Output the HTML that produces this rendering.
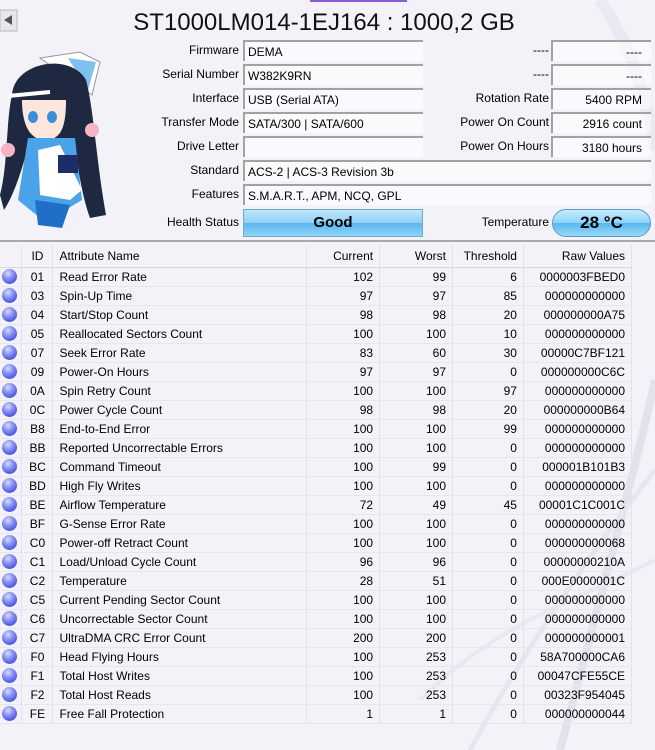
<!DOCTYPE html>
<html><head><meta charset="utf-8"><style>
*{margin:0;padding:0;box-sizing:border-box}
body{width:655px;height:750px;overflow:hidden;background:#f3f2f9;font-family:"Liberation Sans",sans-serif;font-size:12px;color:#000;position:relative}
.a{position:absolute}
.lbl{position:absolute;text-align:right;white-space:nowrap;line-height:20px}
.fld{position:absolute;height:21px;border-top:2px solid #a2a2a2;border-left:2px solid #a2a2a2;background:rgba(255,255,255,.55);line-height:20px;padding-left:3px;white-space:nowrap}
.r{text-align:right;padding-right:9px}
table{position:absolute;left:0;top:245px;border-collapse:collapse;width:632px;font-size:12px}
td,th{height:19px;border-right:1px solid #e2e2ea;border-bottom:1px solid #e6e6ee;font-weight:normal;white-space:nowrap;padding:0 6px}
th{height:22px;border-bottom:1px solid #d6d6de}
tr td:nth-child(2),tr th:nth-child(2){text-align:center}
td:nth-child(3),th:nth-child(3){text-align:left}
td:nth-child(n+4),th:nth-child(n+4){text-align:right}
td:first-child,th:first-child{width:22px;padding:0}
th:nth-child(2),td:nth-child(2){width:31px}
th:nth-child(3),td:nth-child(3){width:254px}
th:nth-child(4),td:nth-child(4){width:73px}
th:nth-child(5),td:nth-child(5){width:73px}
th:nth-child(6),td:nth-child(6){width:71px}
th:nth-child(7),td:nth-child(7){width:108px}
.dot{display:block;width:15px;height:15px;border-radius:50%;margin-left:2px;background:radial-gradient(circle at 40% 30%,#d8dcff 0,#8d95f5 35%,#4a55e0 75%,#3b44c8 100%)}
</style></head><body>
<svg class="a" style="left:0;top:0" width="655" height="750">
<path d="M560 750 C600 600 640 450 655 380" stroke="#e2e2ec" stroke-width="8" fill="none"/>
<path d="M470 750 C530 640 600 540 655 470" stroke="#e6e6ee" stroke-width="5" fill="none"/>
<path d="M420 700 C500 620 580 600 655 560" stroke="#e8e8f0" stroke-width="4" fill="none"/>
<path d="M600 0 C640 60 650 120 655 150" stroke="#e9e9f2" stroke-width="12" fill="none"/>
<rect x="310" y="0" width="97" height="2" fill="#8a5ad8"/>
<rect x="0" y="10" width="17" height="21" fill="#e6e6ec" stroke="#b8b8c0"/>
<path d="M4 20 L12 15 L12 25Z" fill="#555"/>
<g>
<path d="M40 58 L80 52 L100 62 L92 95 Z" fill="#fff" stroke="#999"/>
<path d="M68 58 L96 62 L88 90 Z" fill="#7fc0ee"/>
<path d="M12 95 C14 62 70 52 86 80 C94 110 96 160 106 215 L90 218 C80 190 78 160 72 140 L30 140 C22 170 14 195 4 210 L0 195 C8 165 6 120 12 95Z" fill="#1e2840"/>
<path d="M8 96 L50 92" stroke="#fff" stroke-width="4"/>
<path d="M22 100 C22 125 30 140 45 140 C62 140 66 125 66 100Z" fill="#fde6de"/>
<ellipse cx="33" cy="117" rx="5" ry="6" fill="#3a8fd8"/>
<ellipse cx="52" cy="117" rx="5" ry="6" fill="#3a8fd8"/>
<path d="M28 138 L75 138 L82 200 L45 222 L18 200Z" fill="#4aa3e8"/>
<path d="M38 150 L60 145 L82 190 L70 200 L40 195Z" fill="#fff"/>
<rect x="58" y="155" width="20" height="18" fill="#1c2d6a"/>
<path d="M35 200 L70 205 L62 228 L38 225Z" fill="#1f6fc8"/>
<circle cx="8" cy="150" r="7" fill="#f9b4c4"/>
<circle cx="92" cy="130" r="7" fill="#f9b4c4"/>
</g>
</svg>
<div class="a" style="left:0;top:6px;width:648px;text-align:center;font-size:24px;line-height:34px;color:#111">ST1000LM014-1EJ164 : 1000,2 GB</div>

<div class="lbl" style="right:416px;top:40px">Firmware</div><div class="fld" style="left:243px;top:40px;width:180px">DEMA</div>
<div class="lbl" style="right:416px;top:64px">Serial Number</div><div class="fld" style="left:243px;top:64px;width:180px">W382K9RN</div>
<div class="lbl" style="right:416px;top:88px">Interface</div><div class="fld" style="left:243px;top:88px;width:180px">USB (Serial ATA)</div>
<div class="lbl" style="right:416px;top:112px">Transfer Mode</div><div class="fld" style="left:243px;top:112px;width:180px">SATA/300 | SATA/600</div>
<div class="lbl" style="right:416px;top:136px">Drive Letter</div><div class="fld" style="left:243px;top:136px;width:180px"></div>
<div class="lbl" style="right:416px;top:160px">Standard</div><div class="fld" style="left:243px;top:160px;width:408px">ACS-2 | ACS-3 Revision 3b</div>
<div class="lbl" style="right:416px;top:184px">Features</div><div class="fld" style="left:243px;top:184px;width:408px">S.M.A.R.T., APM, NCQ, GPL</div>
<div class="lbl" style="right:416px;top:212px">Health Status</div>
<div class="a" style="left:243px;top:209px;width:180px;height:28px;border:1px solid #7ab;background:linear-gradient(#bfe6fb,#8fd0f5 50%,#5cb6ee 51%,#8dd4f8);text-align:center;font-weight:bold;font-size:15px;line-height:26px">Good</div>

<div class="lbl" style="right:106px;top:40px">----</div><div class="fld r" style="left:551px;top:40px;width:100px">----</div>
<div class="lbl" style="right:106px;top:64px">----</div><div class="fld r" style="left:551px;top:64px;width:100px">----</div>
<div class="lbl" style="right:106px;top:88px">Rotation Rate</div><div class="fld r" style="left:551px;top:88px;width:100px">5400 RPM</div>
<div class="lbl" style="right:106px;top:112px">Power On Count</div><div class="fld r" style="left:551px;top:112px;width:100px">2916 count</div>
<div class="lbl" style="right:106px;top:136px">Power On Hours</div><div class="fld r" style="left:551px;top:136px;width:100px">3180 hours</div>
<div class="lbl" style="right:106px;top:212px">Temperature</div>
<div class="a" style="left:552px;top:209px;width:99px;height:28px;border:1px solid #5a9ac8;border-radius:14px;background:linear-gradient(#c8ecfd,#8dd3f7 50%,#55b8ef 51%,#9ad9f8);text-align:center;font-weight:bold;font-size:17px;line-height:26px">28 °C</div>

<div class="a" style="left:0;top:240px;width:655px;height:2px;background:#a8a8b0"></div>
<table>
<tr><th></th><th>ID</th><th>Attribute Name</th><th>Current</th><th>Worst</th><th>Threshold</th><th>Raw Values</th></tr>
<tr><td><i class="dot"></i></td><td>01</td><td>Read Error Rate</td><td>102</td><td>99</td><td>6</td><td>0000003FBED0</td></tr>
<tr><td><i class="dot"></i></td><td>03</td><td>Spin-Up Time</td><td>97</td><td>97</td><td>85</td><td>000000000000</td></tr>
<tr><td><i class="dot"></i></td><td>04</td><td>Start/Stop Count</td><td>98</td><td>98</td><td>20</td><td>000000000A75</td></tr>
<tr><td><i class="dot"></i></td><td>05</td><td>Reallocated Sectors Count</td><td>100</td><td>100</td><td>10</td><td>000000000000</td></tr>
<tr><td><i class="dot"></i></td><td>07</td><td>Seek Error Rate</td><td>83</td><td>60</td><td>30</td><td>00000C7BF121</td></tr>
<tr><td><i class="dot"></i></td><td>09</td><td>Power-On Hours</td><td>97</td><td>97</td><td>0</td><td>000000000C6C</td></tr>
<tr><td><i class="dot"></i></td><td>0A</td><td>Spin Retry Count</td><td>100</td><td>100</td><td>97</td><td>000000000000</td></tr>
<tr><td><i class="dot"></i></td><td>0C</td><td>Power Cycle Count</td><td>98</td><td>98</td><td>20</td><td>000000000B64</td></tr>
<tr><td><i class="dot"></i></td><td>B8</td><td>End-to-End Error</td><td>100</td><td>100</td><td>99</td><td>000000000000</td></tr>
<tr><td><i class="dot"></i></td><td>BB</td><td>Reported Uncorrectable Errors</td><td>100</td><td>100</td><td>0</td><td>000000000000</td></tr>
<tr><td><i class="dot"></i></td><td>BC</td><td>Command Timeout</td><td>100</td><td>99</td><td>0</td><td>000001B101B3</td></tr>
<tr><td><i class="dot"></i></td><td>BD</td><td>High Fly Writes</td><td>100</td><td>100</td><td>0</td><td>000000000000</td></tr>
<tr><td><i class="dot"></i></td><td>BE</td><td>Airflow Temperature</td><td>72</td><td>49</td><td>45</td><td>00001C1C001C</td></tr>
<tr><td><i class="dot"></i></td><td>BF</td><td>G-Sense Error Rate</td><td>100</td><td>100</td><td>0</td><td>000000000000</td></tr>
<tr><td><i class="dot"></i></td><td>C0</td><td>Power-off Retract Count</td><td>100</td><td>100</td><td>0</td><td>000000000068</td></tr>
<tr><td><i class="dot"></i></td><td>C1</td><td>Load/Unload Cycle Count</td><td>96</td><td>96</td><td>0</td><td>00000000210A</td></tr>
<tr><td><i class="dot"></i></td><td>C2</td><td>Temperature</td><td>28</td><td>51</td><td>0</td><td>000E0000001C</td></tr>
<tr><td><i class="dot"></i></td><td>C5</td><td>Current Pending Sector Count</td><td>100</td><td>100</td><td>0</td><td>000000000000</td></tr>
<tr><td><i class="dot"></i></td><td>C6</td><td>Uncorrectable Sector Count</td><td>100</td><td>100</td><td>0</td><td>000000000000</td></tr>
<tr><td><i class="dot"></i></td><td>C7</td><td>UltraDMA CRC Error Count</td><td>200</td><td>200</td><td>0</td><td>000000000001</td></tr>
<tr><td><i class="dot"></i></td><td>F0</td><td>Head Flying Hours</td><td>100</td><td>253</td><td>0</td><td>58A700000CA6</td></tr>
<tr><td><i class="dot"></i></td><td>F1</td><td>Total Host Writes</td><td>100</td><td>253</td><td>0</td><td>00047CFE55CE</td></tr>
<tr><td><i class="dot"></i></td><td>F2</td><td>Total Host Reads</td><td>100</td><td>253</td><td>0</td><td>00323F954045</td></tr>
<tr><td><i class="dot"></i></td><td>FE</td><td>Free Fall Protection</td><td>1</td><td>1</td><td>0</td><td>000000000044</td></tr>
</table>
</body></html>
